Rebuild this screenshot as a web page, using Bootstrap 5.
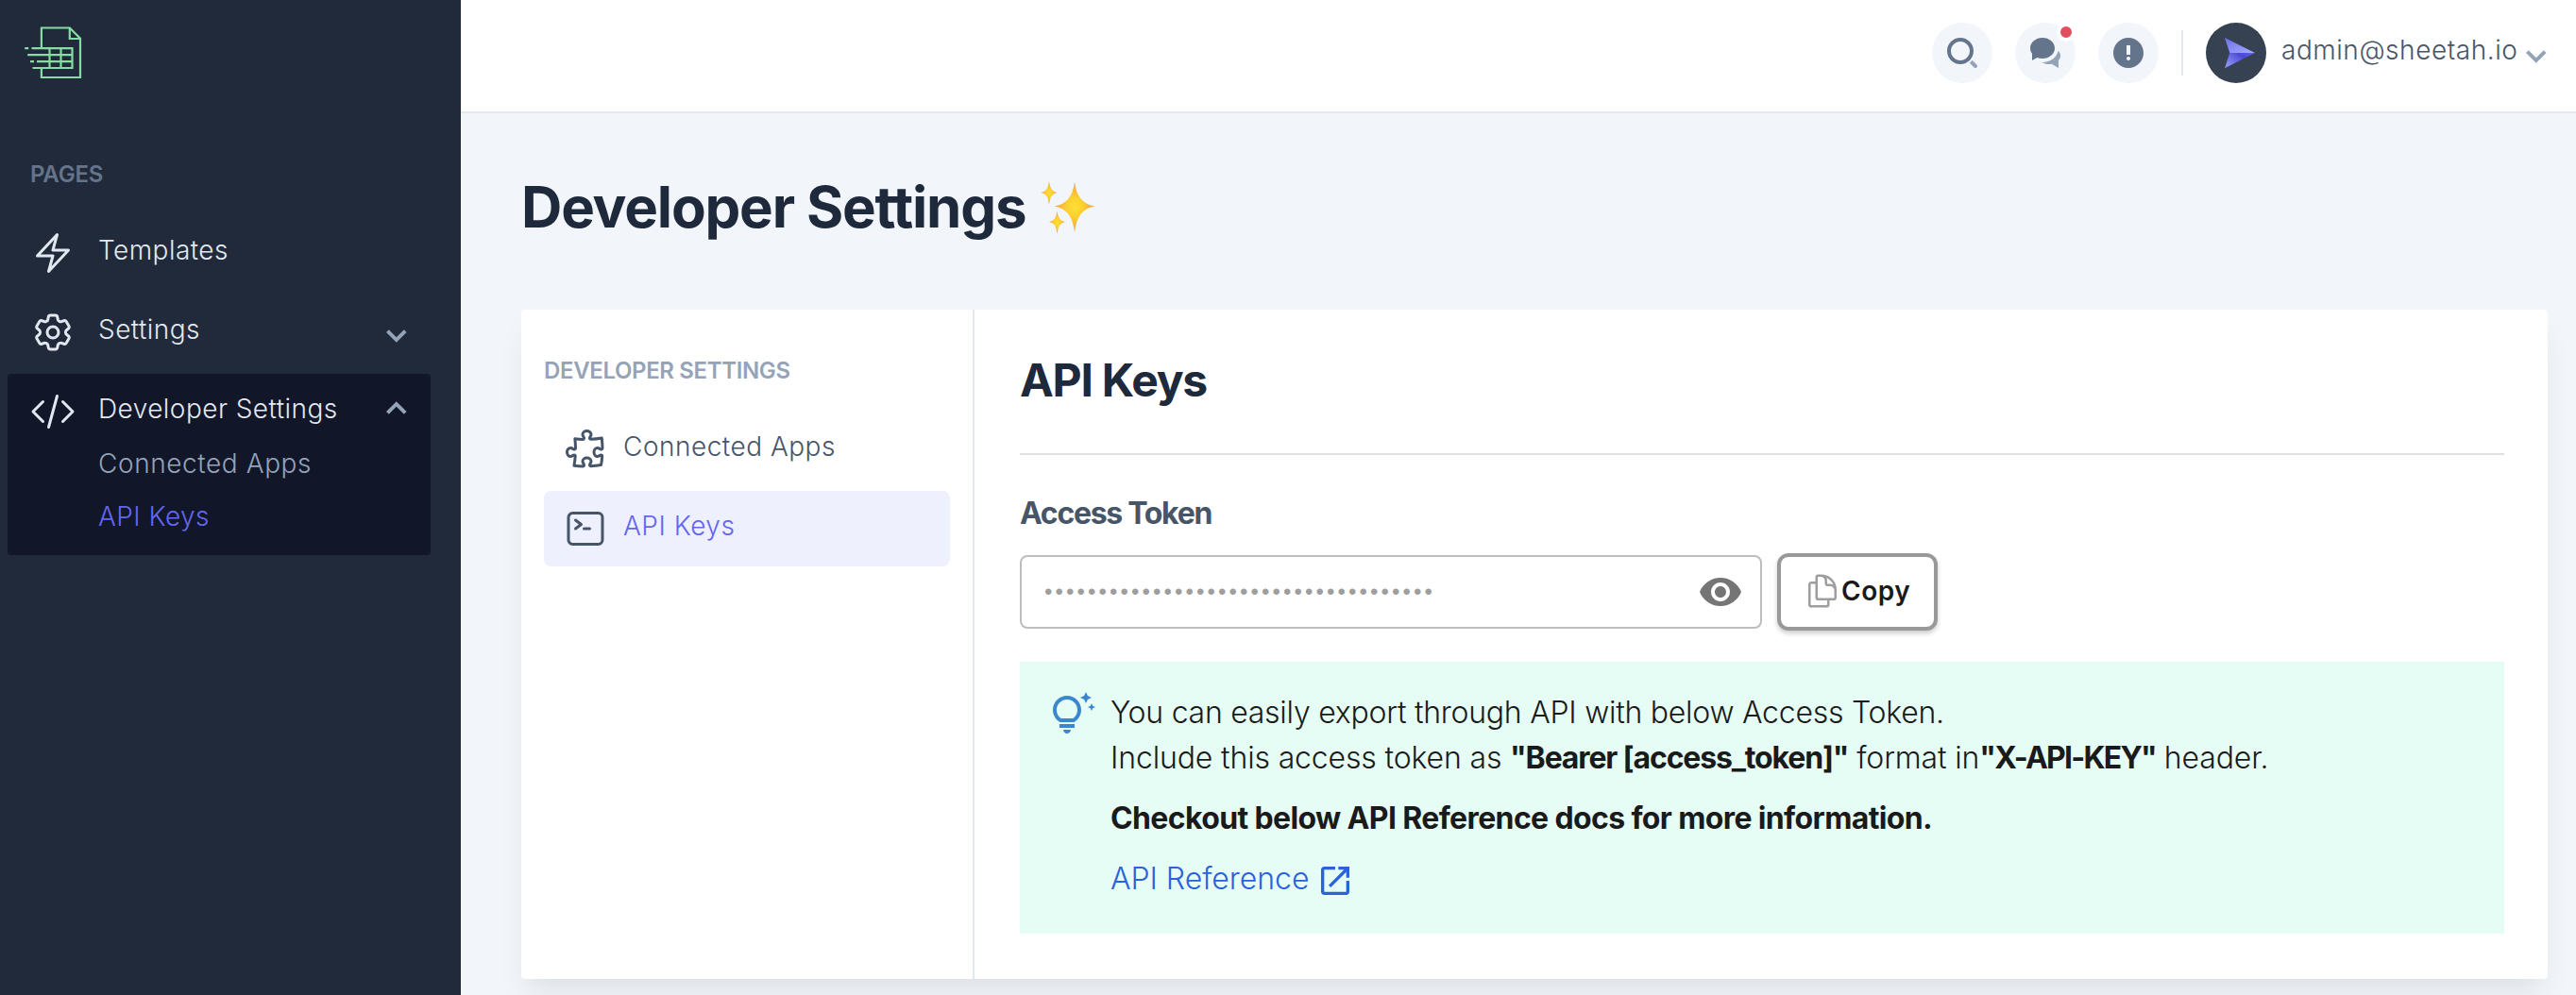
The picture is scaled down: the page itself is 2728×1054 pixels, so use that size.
<!DOCTYPE html>
<html lang="en">
<head>
<meta charset="utf-8">
<title>Developer Settings</title>
<link href="https://cdn.jsdelivr.net/npm/bootstrap@5.3.0/dist/css/bootstrap.min.css" rel="stylesheet">
<style>
  body { font-family: Inter, "Liberation Sans", sans-serif; font-weight: 300; font-size: 28px; line-height: 48px; letter-spacing: .45px; background: #f2f5fa; color: #1a1a1a; height: 1054px; overflow: hidden; }
  svg { flex: none; display: block; }
  a { text-decoration: none; }
  .line-icon { width: 48px; height: 48px; fill: none; stroke: currentColor; stroke-width: 1.5; stroke-linecap: round; stroke-linejoin: round; }
  .chev { width: 24px; height: 24px; fill: #94a3b8; }

  .side { width: 488px; height: 1054px; flex: none; background: #202a3a; color: #e2e8f0; padding: 0 32px 0 8px; }
  .logo-row { height: 169px; }
  .eyebrow { font-size: 24px; font-weight: 600; line-height: 32px; letter-spacing: -.2px; color: #64748b; }
  .side .eyebrow { padding-left: 24px; margin-bottom: 27px; }
  .menu-group { padding: 13px 24px; margin-bottom: 10px; border-radius: 4px; }
  .menu-group.open { background: #111628; }
  .menu-row { height: 48px; gap: 24px; }
  .menu-row svg { margin-top: 6px; }
  .submenu { padding: 6px 0 0 72px; line-height: 56px; }
  .muted-link { color: #94a3b8; letter-spacing: .58px; }
  .accent-link { color: #6366f1; }

  .topbar { height: 120px; background: #fff; border-bottom: 2px solid #e2e8f0; padding: 24px 30px 0 0; gap: 24px; }
  .round-btn { width: 64px; height: 64px; background: #f2f5fa; border-radius: 50%; }
  .alert-dot { position: absolute; top: 0; right: 0; width: 20px; height: 20px; border: 4px solid #fff; border-radius: 50%; background: #e25060; }
  .sep { width: 2px; height: 48px; background: #e2e8f0; }
  .user-name { color: #475569; letter-spacing: .54px; width: 250px; margin: 0 8px 6px 16px; }

  .page-body { padding: 63px 30px 0 64px; }
  .page-title { font-size: 60px; font-weight: 700; line-height: 72px; letter-spacing: -1.2px; color: #1e293b; margin-bottom: 73px; gap: 15px; }
  .panel { height: 709px; border-radius: 4px; background: #fff; box-shadow: 0 20px 30px -6px rgba(0,0,0,.08), 0 8px 12px -4px rgba(0,0,0,.01); }
  .panel-nav { width: 480px; flex: none; border-right: 2px solid #e2e8f0; padding: 45px 24px 0; color: #475569; }
  .panel-nav .eyebrow { color: #94a3b8; line-height: 40px; margin-bottom: 23px; letter-spacing: -.36px; }
  .panel-item { height: 80px; padding-left: 20px; gap: 16px; margin-bottom: 4px; border-radius: 8px; }
  .panel-item span { margin-bottom: 6px; letter-spacing: .5px; }
  .panel-item.current { background: #eef0fe; }
  .panel-main { padding: 45px 46px 0 48px; }
  .section-title { font-size: 48px; font-weight: 700; line-height: 60px; letter-spacing: -1.25px; color: #1e293b; margin-bottom: 47px; }
  .rule { height: 2px; background: #e0e0e0; margin-bottom: 42px; }
  .field-label { font-size: 32px; font-weight: 700; line-height: 40px; letter-spacing: -1.3px; color: #475569; margin-bottom: 22px; }
  .token-row { gap: 16px; height: 82px; margin-bottom: 33px; }
  .token-box { width: 786px; height: 78px; border: 2px solid #bdbdbd; border-radius: 8px; padding: 0 18px 0 24px; background: #fff; }
  .token-box input { font-family: "Liberation Sans", sans-serif; font-size: 24px; letter-spacing: 3.1px; color: #9e9e9e; }
  .copy-btn { width: 170px; height: 82px; padding: 0 24px 3px; border: 4px solid #999; border-radius: 12px; background: #fff; font-size: 28px; font-weight: 600; line-height: 40px; letter-spacing: .5px; color: #1a1a1a; box-shadow: 0 3px 5px rgba(0,0,0,.2); }
  .copy-btn svg { width: 40px; height: 40px; color: #9e9e9e; }
  .info-box { height: 288px; background: #e6fdf5; padding: 30px 32px; gap: 16px; font-size: 32px; line-height: 48px; letter-spacing: -.15px; }
  .info-box svg.bulb { width: 48px; height: 48px; margin-top: 2px; fill: #3a87cf; }
  .info-box b { font-weight: 700; }
  .info-box .first-line { letter-spacing: -.26px; }
  .info-box .tight { letter-spacing: -1.15px; }
  .info-box .tighter { letter-spacing: -1.75px; }
  .info-box .note { letter-spacing: -.63px; margin: 16px 0; }
  .ref-link { color: #2962d9; gap: 8px; letter-spacing: -.05px; }
</style>
</head>
<body>
<div class="d-flex">
  <aside class="side">
    <div class="logo-row">
      <svg width="100" height="100" viewBox="8 0 100 100" fill="none" stroke="#86dca2" stroke-width="2.2">
        <path d="M43.9 51V29.5H73.8L85 40.7V82H43.9V72M73.8 29.5V41H85M26.2 51.2h4M33.5 51.2H76.5V72H34.5M29.2 58.1H76M32 65.1h4M39 65.1H76M64.5 51V72M52.5 51V72"/>
      </svg>
    </div>
    <div class="eyebrow">PAGES</div>
    <div class="menu-group">
      <div class="menu-row d-flex align-items-center">
        <svg class="line-icon" viewBox="0 0 24 24"><path d="M3.75 13.5l10.5-11.25L12 10.5h8.25L9.75 21.75 12 13.5H3.75z"/></svg>
        <span>Templates</span>
      </div>
    </div>
    <div class="menu-group">
      <div class="menu-row d-flex align-items-center">
        <svg class="line-icon" viewBox="0 0 24 24"><path d="M9.594 3.94c.09-.542.56-.94 1.11-.94h2.593c.55 0 1.02.398 1.11.94l.213 1.281c.063.374.313.686.645.87.074.04.147.083.22.127.324.196.72.257 1.075.124l1.217-.456a1.125 1.125 0 011.37.49l1.296 2.247a1.125 1.125 0 01-.26 1.431l-1.003.827c-.293.24-.438.613-.431.992a6.759 6.759 0 010 .255c-.007.378.138.75.43.99l1.005.828c.424.35.534.954.26 1.43l-1.298 2.247a1.125 1.125 0 01-1.369.491l-1.217-.456c-.355-.133-.75-.072-1.076.124a6.57 6.57 0 01-.22.128c-.331.183-.581.495-.644.869l-.213 1.28c-.09.543-.56.941-1.11.941h-2.594c-.55 0-1.02-.398-1.11-.94l-.213-1.281c-.062-.374-.312-.686-.644-.87a6.52 6.52 0 01-.22-.127c-.325-.196-.72-.257-1.076-.124l-1.217.456a1.125 1.125 0 01-1.369-.49l-1.297-2.247a1.125 1.125 0 01.26-1.431l1.004-.827c.292-.24.437-.613.43-.992a6.932 6.932 0 010-.255c.007-.378-.138-.75-.43-.99l-1.004-.828a1.125 1.125 0 01-.26-1.43l1.297-2.247a1.125 1.125 0 011.37-.491l1.216.456c.356.133.751.072 1.076-.124.072-.044.146-.087.22-.128.332-.183.582-.495.644-.869l.214-1.281z"/><path d="M15 12a3 3 0 11-6 0 3 3 0 016 0z"/></svg>
        <span>Settings</span>
        <svg class="chev ms-auto" viewBox="0 0 12 12"><path d="M5.9 11.4L.5 6l1.4-1.4 4 4 4-4L11.3 6z"/></svg>
      </div>
    </div>
    <div class="menu-group open">
      <div class="menu-row d-flex align-items-center">
        <svg class="line-icon" viewBox="0 0 24 24"><path d="M17.25 6.75L22.5 12l-5.25 5.25m-10.5 0L1.5 12l5.25-5.25m7.5-3l-4.5 16.5"/></svg>
        <span>Developer Settings</span>
        <svg class="chev ms-auto" viewBox="0 0 12 12"><path d="M5.9 .6L.5 6l1.4 1.4 4-4 4 4L11.3 6z"/></svg>
      </div>
      <div class="submenu">
        <a class="d-block muted-link" href="#">Connected Apps</a>
        <a class="d-block accent-link" href="#">API Keys</a>
      </div>
    </div>
  </aside>

  <div class="flex-grow-1">
    <header class="topbar d-flex justify-content-end align-items-start">
      <div class="round-btn d-flex align-items-center justify-content-center">
        <svg width="32" height="32" viewBox="0 0 16 16"><path fill="#64748b" d="M7 14c-3.86 0-7-3.14-7-7s3.14-7 7-7 7 3.14 7 7-3.14 7-7 7zM7 2C4.243 2 2 4.243 2 7s2.243 5 5 5 5-2.243 5-5-2.243-5-5-5z"/><path fill="#94a3b8" d="M15.707 14.293L13.314 11.9a8.019 8.019 0 01-1.414 1.414l2.393 2.393a.997.997 0 001.414 0 .999.999 0 000-1.414z"/></svg>
      </div>
      <div class="round-btn d-flex align-items-center justify-content-center position-relative">
        <svg width="32" height="32" viewBox="0 0 16 16"><path fill="#64748b" d="M6.5 0C2.91 0 0 2.462 0 5.5c0 1.075.37 2.074 1 2.922V12l2.699-1.542A7.454 7.454 0 006.5 11c3.59 0 6.5-2.462 6.5-5.5S10.09 0 6.5 0z"/><path fill="#94a3b8" d="M16 9.5c0-.987-.429-1.897-1.147-2.639C14.124 10.348 10.66 13 6.5 13c-.103 0-.202-.018-.305-.021C7.231 13.617 8.556 14 10 14c.449 0 .886-.04 1.307-.11L15 16v-4c.624-.708 1-1.581 1-2.5z"/></svg>
        <span class="alert-dot"></span>
      </div>
      <div class="round-btn d-flex align-items-center justify-content-center">
        <svg width="32" height="32" viewBox="0 0 16 16"><path fill="#64748b" d="M8 0C3.6 0 0 3.6 0 8s3.6 8 8 8 8-3.6 8-8-3.6-8-8-8zm0 12c-.6 0-1-.4-1-1s.4-1 1-1 1 .4 1 1-.4 1-1 1zm1-3H7V4h2v5z"/></svg>
      </div>
      <div class="sep mt-2"></div>
      <div class="d-flex align-items-center">
        <svg width="64" height="64" viewBox="0 0 64 64">
          <defs>
            <linearGradient id="wingTop" x1="0" y1="0" x2="1" y2="1"><stop offset="0" stop-color="#6d6ef0"/><stop offset="1" stop-color="#a5adf8"/></linearGradient>
            <linearGradient id="wingLow" x1="0" y1=".6" x2="1" y2="0"><stop offset="0" stop-color="#8b90f6"/><stop offset=".6" stop-color="#4a47d2"/><stop offset="1" stop-color="#6366f1"/></linearGradient>
          </defs>
          <circle cx="32" cy="32" r="32" fill="#364152"/>
          <path fill="url(#wingTop)" d="M20 16L52 32H25.3z"/>
          <path fill="url(#wingLow)" d="M20 48.3L52 32H25.3z"/>
        </svg>
        <span class="user-name text-nowrap">admin@sheetah.io</span>
        <svg class="chev" viewBox="0 0 12 12"><path d="M5.9 11.4L.5 6l1.4-1.4 4 4 4-4L11.3 6z"/></svg>
      </div>
    </header>

    <main class="page-body">
      <h1 class="page-title d-flex align-items-center">Developer Settings
        <svg width="60" height="60" viewBox="0 0 60 60">
          <defs><radialGradient id="glow"><stop offset="0" stop-color="#fddf35"/><stop offset=".4" stop-color="#fbd030"/><stop offset="1" stop-color="#f29a4c"/></radialGradient></defs>
          <g fill="url(#glow)">
            <path d="M37 3.5Q39.5 26.5 58.5 29.5Q39.5 32.5 37 57Q34.5 32.5 15.5 29.5Q34.5 26.5 37 3.5z"/>
            <path d="M10 3Q11.2 14 18.5 15Q11.2 16 10 27.5Q8.8 16 1.5 15Q8.8 14 10 3z"/>
            <path d="M18.5 34.5Q19.7 45 27 46Q19.7 47 18.5 58.5Q17.3 47 10 46Q17.3 45 18.5 34.5z"/>
          </g>
        </svg>
      </h1>

      <div class="panel d-flex">
        <nav class="panel-nav">
          <div class="eyebrow text-nowrap">DEVELOPER SETTINGS</div>
          <div class="panel-item d-flex align-items-center">
            <svg class="line-icon" viewBox="0 0 24 24"><path d="M14.25 6.087c0-.355.186-.676.401-.959.221-.29.349-.634.349-1.003 0-1.036-1.007-1.875-2.25-1.875s-2.25.84-2.25 1.875c0 .369.128.713.349 1.003.215.283.401.604.401.959v0a.64.64 0 01-.657.643 48.39 48.39 0 01-4.163-.3c.186 1.613.293 3.25.315 4.907a.656.656 0 01-.658.663v0c-.355 0-.676-.186-.959-.401a1.647 1.647 0 00-1.003-.349c-1.036 0-1.875 1.007-1.875 2.25s.84 2.25 1.875 2.25c.369 0 .713-.128 1.003-.349.283-.215.604-.401.959-.401v0c.31 0 .555.26.532.57a48.039 48.039 0 01-.642 5.056c1.518.19 3.058.309 4.616.354a.64.64 0 00.657-.643v0c0-.355-.186-.676-.401-.959a1.647 1.647 0 01-.349-1.003c0-1.035 1.008-1.875 2.25-1.875 1.243 0 2.25.84 2.25 1.875 0 .369-.128.713-.349 1.003-.215.283-.4.604-.4.959v0c0 .333.277.599.61.58a48.1 48.1 0 005.427-.63 48.05 48.05 0 00.582-4.717.532.532 0 00-.533-.57v0c-.355 0-.676.186-.959.401-.29.221-.634.349-1.003.349-1.035 0-1.875-1.007-1.875-2.25s.84-2.25 1.875-2.25c.37 0 .713.128 1.003.349.283.215.604.401.96.401v0a.656.656 0 00.658-.663 48.422 48.422 0 00-.37-5.36c-1.886.342-3.81.574-5.766.689a.578.578 0 01-.61-.58v0z"/></svg>
            <span>Connected Apps</span>
          </div>
          <div class="panel-item current d-flex align-items-center">
            <svg class="line-icon" viewBox="0 0 24 24"><path d="M6.75 7.5l3 2.25-3 2.25m4.5 0h3m-9 8.25h13.5A2.25 2.25 0 0021 18V6a2.25 2.25 0 00-2.25-2.25H5.25A2.25 2.25 0 003 6v12a2.25 2.25 0 002.25 2.25z"/></svg>
            <span class="accent-link">API Keys</span>
          </div>
        </nav>

        <section class="panel-main flex-grow-1">
          <h2 class="section-title">API Keys</h2>
          <div class="rule"></div>
          <div class="field-label">Access Token</div>
          <div class="token-row d-flex align-items-center">
            <div class="token-box d-flex align-items-center">
              <input class="border-0 bg-transparent p-0 flex-grow-1" type="text" readonly aria-label="Access Token" value="••••••••••••••••••••••••••••••••••••">
              <svg width="48" height="48" viewBox="0 0 24 24" fill="#757575"><path d="M12 4.5C7 4.5 2.73 7.61 1 12c1.73 4.39 6 7.5 11 7.5s9.27-3.11 11-7.5c-1.73-4.39-6-7.5-11-7.5zM12 17c-2.76 0-5-2.24-5-5s2.24-5 5-5 5 2.24 5 5-2.24 5-5 5zm0-8c-1.66 0-3 1.34-3 3s1.34 3 3 3 3-1.34 3-3-1.34-3-3-3z"/></svg>
            </div>
            <button class="copy-btn d-flex align-items-center" type="button">
              <svg class="line-icon" viewBox="0 0 24 24"><path d="M15.75 17.25v3.375c0 .621-.504 1.125-1.125 1.125h-9.75a1.125 1.125 0 01-1.125-1.125V7.875c0-.621.504-1.125 1.125-1.125H6.75a9.06 9.06 0 011.5.124m7.5 10.376h3.375c.621 0 1.125-.504 1.125-1.125V11.25c0-4.46-3.243-8.161-7.5-8.876a9.06 9.06 0 00-1.5-.124H9.375c-.621 0-1.125.504-1.125 1.125v3.5m7.5 10.375H9.375a1.125 1.125 0 01-1.125-1.125v-9.25m12 6.625v-1.875a3.375 3.375 0 00-3.375-3.375h-1.5a1.125 1.125 0 01-1.125-1.125v-1.5a3.375 3.375 0 00-3.375-3.375H9.75"/></svg>
              <span>Copy</span>
            </button>
          </div>
          <div class="info-box d-flex">
            <svg class="bulb" viewBox="0 0 24 24"><path d="M7 20h4c0 1.1-.9 2-2 2s-2-.9-2-2zm-2-1h8v-2H5v2zm11.5-9.5c0 3.82-2.66 5.86-3.77 6.5H5.27c-1.11-.64-3.77-2.68-3.77-6.5C1.5 5.36 4.86 2 9 2s7.5 3.36 7.5 7.5zm-2 0C14.5 6.47 12.03 4 9 4S3.5 6.47 3.5 9.5c0 2.47 1.49 3.89 2.35 4.5h6.3c.86-.61 2.35-2.03 2.35-4.5zm6.87-2.13L20 8l1.37.63L22 10l.63-1.37L24 8l-1.37-.63L22 6l-.63 1.37zM19 6l.94-2.06L22 3l-2.06-.94L19 0l-.94 2.06L16 3l2.06.94L19 6z"/></svg>
            <div>
              <div class="first-line">You can easily export through API with below Access Token.</div>
              <div>Include this access token as <b class="tight">"Bearer [access_token]"</b> format in<b class="tighter">"X-API-KEY"</b> header.</div>
              <div class="note"><b>Checkout below API Reference docs for more information.</b></div>
              <a class="ref-link d-flex align-items-center" href="#">API Reference
                <svg class="mt-1" width="40" height="40" viewBox="0 0 24 24" fill="currentColor"><path d="M19 19H5V5h7V3H5c-1.11 0-2 .9-2 2v14c0 1.1.89 2 2 2h14c1.1 0 2-.9 2-2v-7h-2v7zM14 3v2h3.59l-9.83 9.83 1.41 1.41L19 6.41V10h2V3h-7z"/></svg>
              </a>
            </div>
          </div>
        </section>
      </div>
    </main>
  </div>
</div>
<script src="https://cdn.jsdelivr.net/npm/bootstrap@5.3.0/dist/js/bootstrap.bundle.min.js"></script>
</body>
</html>
